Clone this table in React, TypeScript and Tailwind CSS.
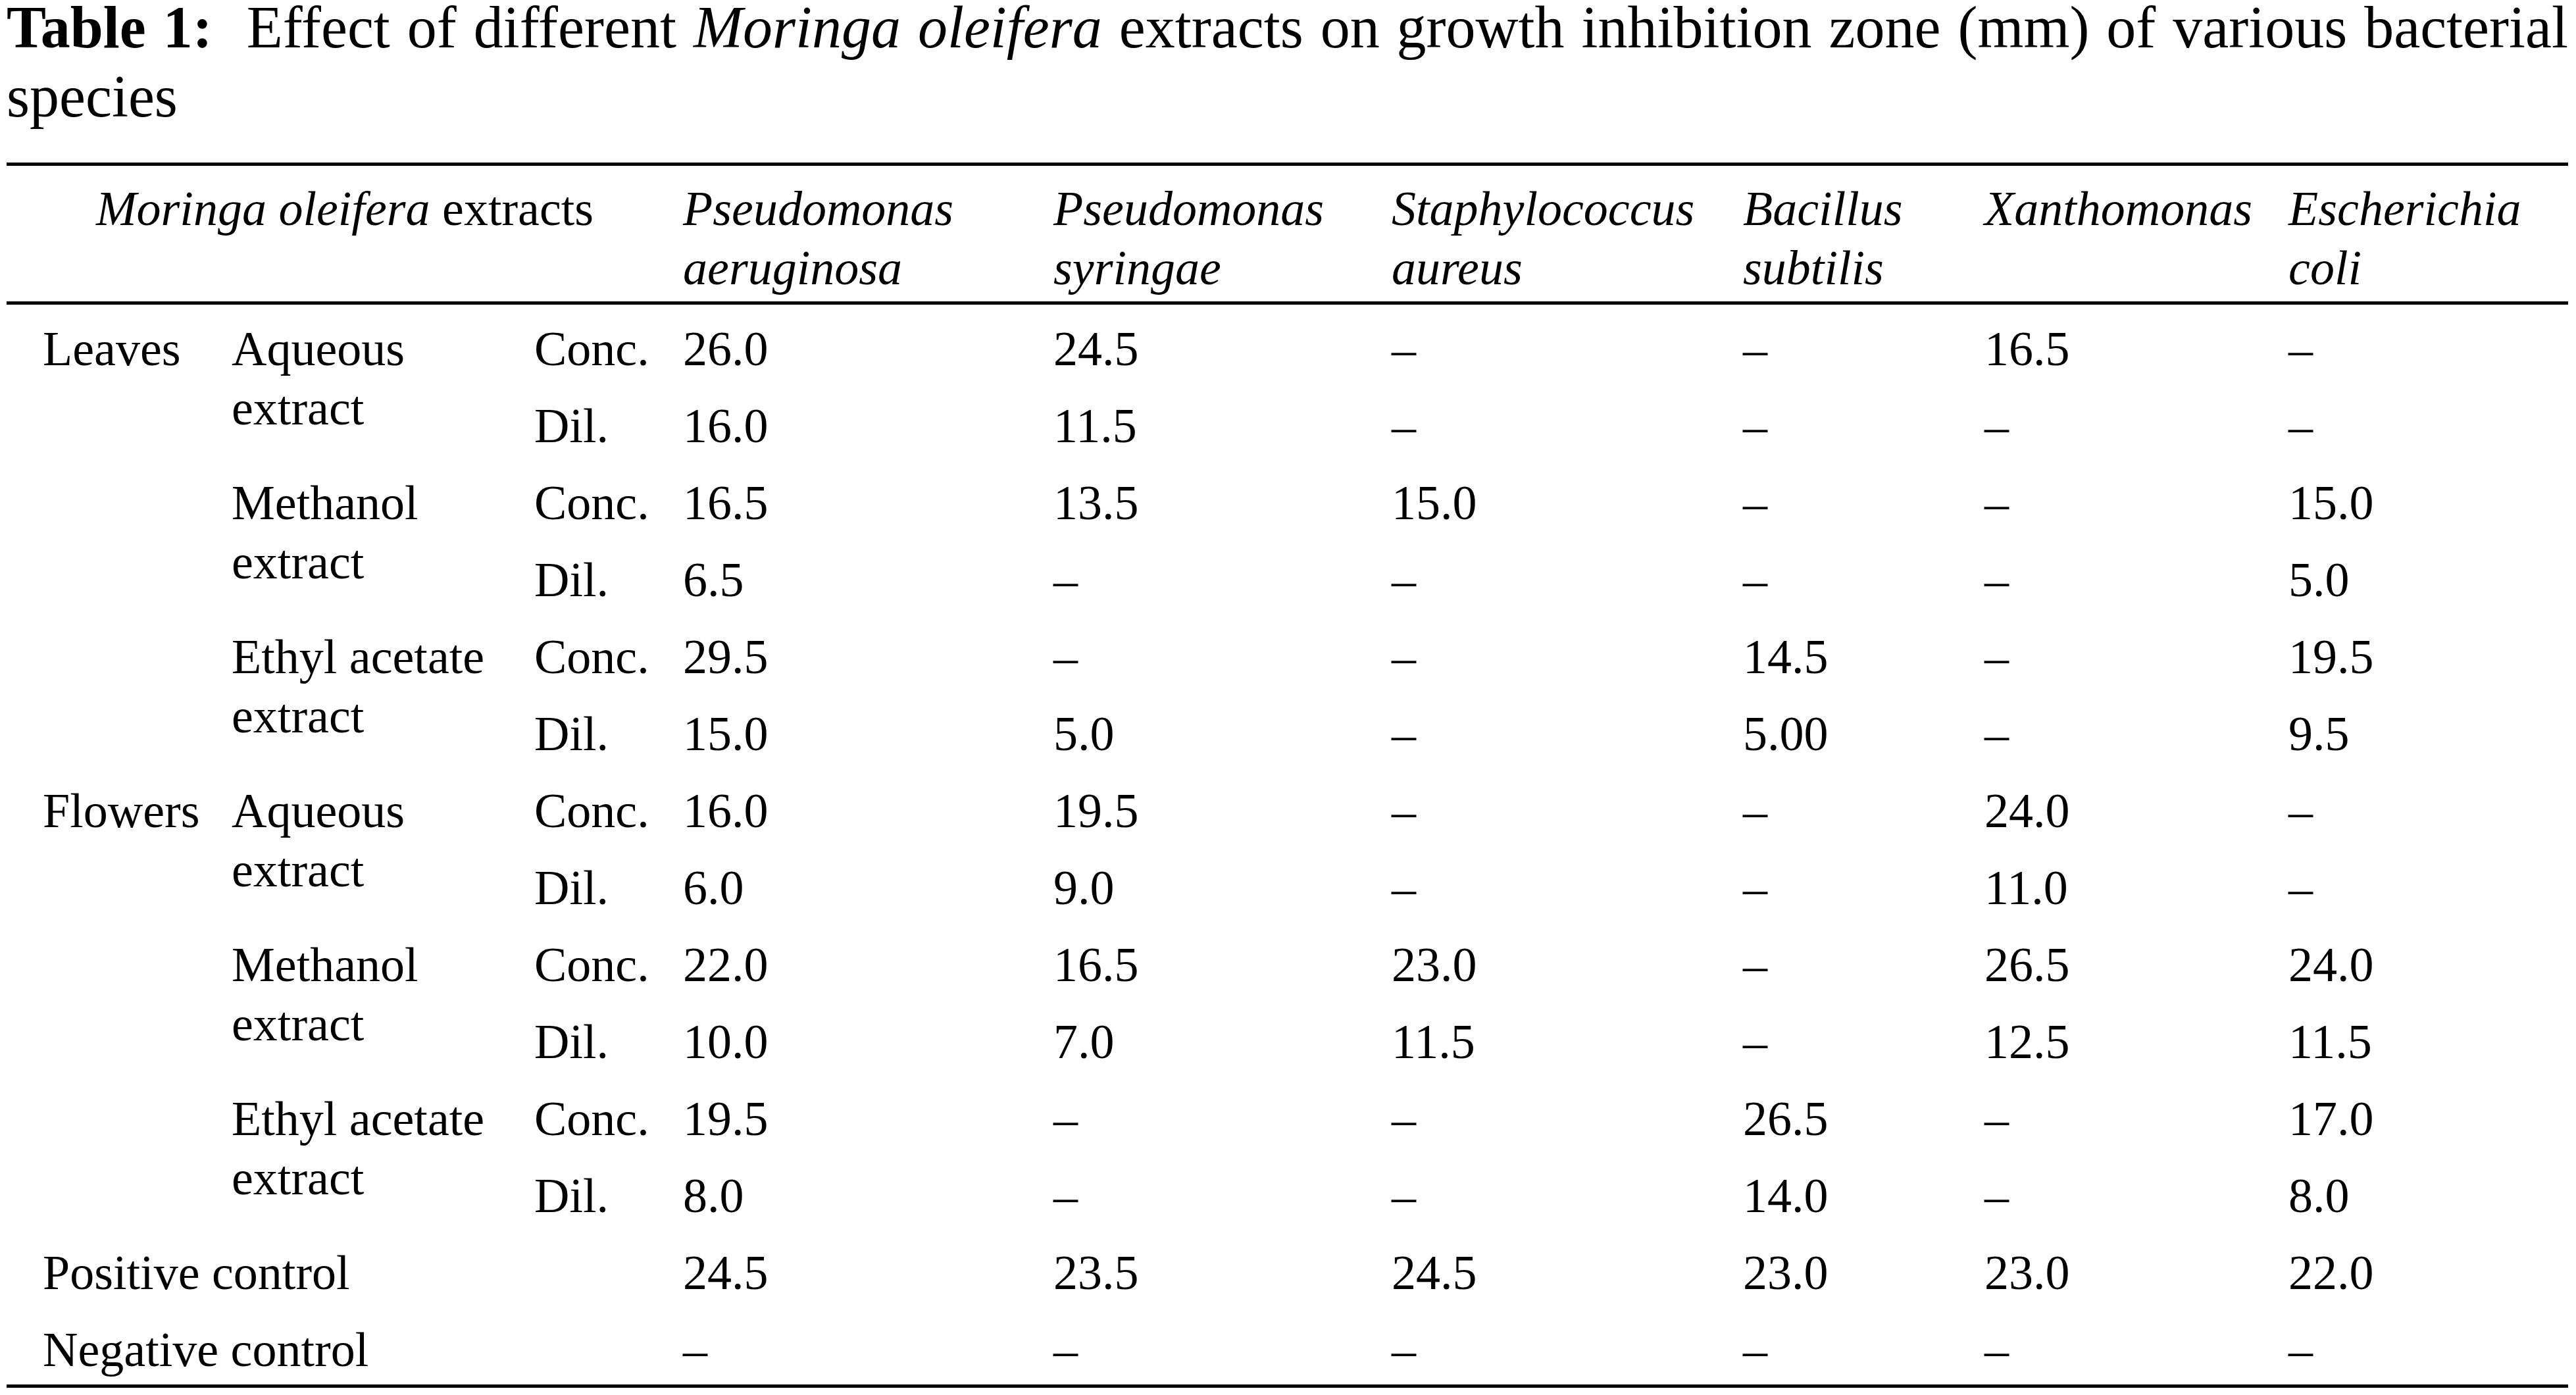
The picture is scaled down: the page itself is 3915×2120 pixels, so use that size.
import React from 'react';

type Extract = {
  name: [string, string];
  conc: string[];
  dil: string[];
};

type Part = {
  part: string;
  extracts: Extract[];
};

const D = '–';

const parts: Part[] = [
  {
    part: 'Leaves',
    extracts: [
      { name: ['Aqueous', 'extract'], conc: ['26.0', '24.5', D, D, '16.5', D], dil: ['16.0', '11.5', D, D, D, D] },
      { name: ['Methanol', 'extract'], conc: ['16.5', '13.5', '15.0', D, D, '15.0'], dil: ['6.5', D, D, D, D, '5.0'] },
      { name: ['Ethyl acetate', 'extract'], conc: ['29.5', D, D, '14.5', D, '19.5'], dil: ['15.0', '5.0', D, '5.00', D, '9.5'] },
    ],
  },
  {
    part: 'Flowers',
    extracts: [
      { name: ['Aqueous', 'extract'], conc: ['16.0', '19.5', D, D, '24.0', D], dil: ['6.0', '9.0', D, D, '11.0', D] },
      { name: ['Methanol', 'extract'], conc: ['22.0', '16.5', '23.0', D, '26.5', '24.0'], dil: ['10.0', '7.0', '11.5', D, '12.5', '11.5'] },
      { name: ['Ethyl acetate', 'extract'], conc: ['19.5', D, D, '26.5', D, '17.0'], dil: ['8.0', D, D, '14.0', D, '8.0'] },
    ],
  },
];

const species: [string, string][] = [
  ['Pseudomonas', 'aeruginosa'],
  ['Pseudomonas', 'syringae'],
  ['Staphylococcus', 'aureus'],
  ['Bacillus', 'subtilis'],
  ['Xanthomonas', ''],
  ['Escherichia', 'coli'],
];

const cell = 'p-0 pt-[22px] pb-[5px] text-left align-top font-normal whitespace-nowrap';

const Values = ({ values }: { values: string[] }) => (
  <>
    {values.map((v, i) => (
      <td key={i} className={cell}>{v}</td>
    ))}
  </>
);

export default function App() {
  return (
    <div className="min-h-screen bg-white text-black font-['Liberation_Serif','Times_New_Roman',serif]">
      <div className="w-[3893px] ml-[10px] pt-[1px]">
        <p className="-mt-[12px] text-[90px] leading-[105px] text-justify">
          <b>Table 1:</b>&nbsp; Effect of different <i>Moringa oleifera</i> extracts on growth inhibition zone (mm) of various bacterial species
        </p>

        <table className="mt-[48px] w-[3893px] table-fixed border-separate border-spacing-0 text-[74px] leading-[90px]">
          <colgroup>
            <col className="w-[342px]" />
            <col className="w-[460px]" />
            <col className="w-[226px]" />
            <col className="w-[563px]" />
            <col className="w-[514px]" />
            <col className="w-[534px]" />
            <col className="w-[367px]" />
            <col className="w-[462px]" />
            <col className="w-[425px]" />
          </colgroup>
          <thead>
            <tr>
              <th
                colSpan={3}
                className="p-0 pt-[20px] pb-[6px] border-y-[5px] border-black text-center align-top font-normal whitespace-nowrap"
              >
                <i>Moringa oleifera</i> extracts
              </th>
              {species.map(([a, b]) => (
                <th
                  key={a + b}
                  className="p-0 pt-[20px] pb-[6px] border-y-[5px] border-black text-left align-top font-normal italic whitespace-nowrap"
                >
                  {a}
                  <br />
                  {b}
                </th>
              ))}
            </tr>
          </thead>
          <tbody>
            {parts.map((p) =>
              p.extracts.map((e, ei) => (
                <React.Fragment key={p.part + ei}>
                  <tr>
                    {ei === 0 && (
                      <td rowSpan={6} className={cell + ' pl-[55px]'}>
                        {p.part}
                      </td>
                    )}
                    <td rowSpan={2} className={cell}>
                      {e.name[0]}
                      <br />
                      {e.name[1]}
                    </td>
                    <td className={cell}>Conc.</td>
                    <Values values={e.conc} />
                  </tr>
                  <tr>
                    <td className={cell}>Dil.</td>
                    <Values values={e.dil} />
                  </tr>
                </React.Fragment>
              ))
            )}
            <tr>
              <td colSpan={3} className={cell + ' pl-[55px]'}>Positive control</td>
              <Values values={['24.5', '23.5', '24.5', '23.0', '23.0', '22.0']} />
            </tr>
            <tr>
              <td colSpan={3} className={cell + ' pl-[55px] pb-[8px] border-b-[5px] border-black'}>Negative control</td>
              {[D, D, D, D, D, D].map((v, i) => (
                <td key={i} className={cell + ' pb-[8px] border-b-[5px] border-black'}>{v}</td>
              ))}
            </tr>
          </tbody>
        </table>
      </div>
    </div>
  );
}
